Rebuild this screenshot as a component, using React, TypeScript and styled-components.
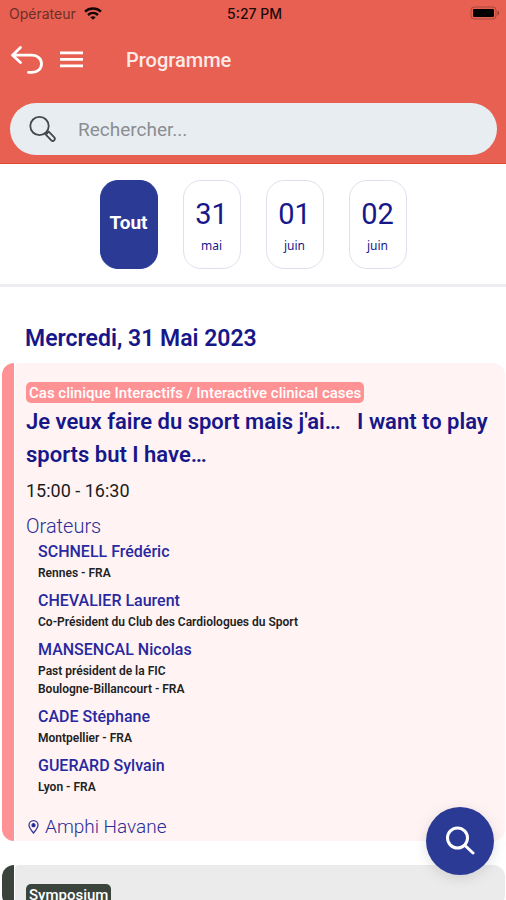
import React, { useState } from "react";
import styled, { createGlobalStyle } from "styled-components";

const GlobalStyle = createGlobalStyle`
  *, *::before, *::after { box-sizing: border-box; }
  body {
    margin: 0;
    background: #fff;
    font-family: Roboto, "Liberation Sans", sans-serif;
    color: #1c1c1c;
  }
  button, input { font: inherit; }
  h1, h2, h3, p, ul { margin: 0; padding: 0; }
`;

const navy = "#17178a";
const blue = "#2b3a95";

const Screen = styled.div`
  display: flex;
  flex-direction: column;
  height: 100vh;
  overflow: hidden;
`;

const Header = styled.header`
  background: #e86052;
  border-bottom: 1px solid #dc4a36;
  padding-bottom: 8px;
`;

const StatusBar = styled.div`
  display: grid;
  grid-template-columns: 1fr auto 1fr;
  align-items: center;
  height: 26px;
  padding: 0 6px 0 9px;
  font-family: Inter, Roboto, sans-serif;
  font-size: 14px;
  color: #1a0b09;
`;

const Carrier = styled.span`
  display: flex;
  align-items: center;
  gap: 8px;
  color: #6c2f28;
`;

const Clock = styled.span`
  font-weight: 500;
`;

const Battery = styled.svg`
  justify-self: end;
`;

const NavBar = styled.div`
  display: flex;
  align-items: center;
  height: 68px;
  padding: 0 10px;
`;

const IconButton = styled.button`
  display: flex;
  padding: 0;
  border: 0;
  background: none;
  color: #fff;
  cursor: pointer;
`;

const MenuButton = styled(IconButton)`
  margin: 0 42px 0 16px;
`;

const Title = styled.h1`
  font-size: 20px;
  font-weight: 500;
  line-height: 24px;
  color: #fdeae7;
`;

const SearchBar = styled.label`
  display: flex;
  align-items: center;
  gap: 20px;
  height: 52px;
  margin: 9px 9px 0 10px;
  padding: 0 18px;
  border-radius: 26px;
  background: #e8edf1;
`;

const SearchInput = styled.input`
  flex: 1;
  min-width: 0;
  padding: 0;
  border: 0;
  outline: 0;
  background: none;
  font-size: 19px;
  color: #333;
  &::placeholder {
    color: #8b8e91;
    opacity: 1;
  }
`;

const Days = styled.nav`
  display: flex;
  flex-shrink: 0;
  justify-content: center;
  gap: 25px;
  padding: 16px 0 15px;
  border-bottom: 3px solid #edeef2;
`;

const DayButton = styled.button<{ $active: boolean }>`
  display: flex;
  flex-direction: column;
  align-items: center;
  justify-content: center;
  width: 58px;
  height: 89px;
  padding: 0;
  border: 1px solid ${(p) => (p.$active ? blue : "#dfe0ee")};
  border-radius: 18px;
  background: ${(p) => (p.$active ? blue : "#fff")};
  color: ${(p) => (p.$active ? "#fff" : navy)};
  cursor: pointer;
`;

const DayAll = styled.span`
  padding-bottom: 4px;
  font-size: 19px;
  font-weight: 700;
`;

const DayNumber = styled.span`
  padding-top: 6px;
  font-size: 29px;
  line-height: 36px;
`;

const DayMonth = styled.span`
  font-family: "Noto Sans", sans-serif;
  font-size: 12px;
  line-height: 28px;
`;

const List = styled.main`
  flex: 1;
  min-height: 0;
  overflow: hidden;
`;

const DateHeading = styled.h2`
  padding: 36px 25px 8px;
  font-size: 23px;
  font-weight: 600;
  line-height: 32px;
  color: ${navy};
`;

const Card = styled.article<{ $accent: string; $tint: string }>`
  --accent: ${(p) => p.$accent};
  display: flex;
  gap: 1px;
  margin: 0 1px 24px 2px;
  &::before {
    content: "";
    width: 12px;
    border-radius: 12px 0 0 12px;
    background: var(--accent);
  }
  > div {
    background: ${(p) => p.$tint};
  }
`;

const CardBody = styled.div`
  flex: 1;
  min-width: 0;
  padding: 19px 12px 2px 11px;
  border-radius: 4px 12px 12px 4px;
`;

const Tag = styled.span`
  display: block;
  width: fit-content;
  padding: 1px 3px 0;
  border-radius: 5px;
  background: var(--accent);
  font-size: 15px;
  font-weight: 500;
  line-height: 20px;
  color: #fff;
`;

const SessionTitle = styled.h3`
  margin: 2px 0 8px;
  font-size: 22px;
  font-weight: 600;
  line-height: 33px;
  color: ${navy};
  white-space: pre-wrap;
`;

const Time = styled.p`
  margin-bottom: 11px;
  font-size: 18px;
  line-height: 24px;
`;

const SectionLabel = styled.p`
  margin-bottom: 2px;
  font-size: 20px;
  font-weight: 300;
  line-height: 24px;
  color: #2c2c96;
`;

const Speakers = styled.ul`
  display: flex;
  flex-direction: column;
  gap: 7px;
  padding-left: 12px;
  list-style: none;
`;

const SpeakerName = styled.p`
  font-size: 16px;
  font-weight: 500;
  line-height: 24px;
  color: #2828a0;
`;

const SpeakerDetail = styled.p`
  font-size: 12px;
  font-weight: 600;
  line-height: 18px;
  color: #222;
`;

const Place = styled.p`
  display: flex;
  align-items: center;
  gap: 6px;
  margin-top: 19px;
  padding-left: 2px;
  font-size: 19px;
  font-weight: 300;
  line-height: 24px;
  color: #2c2c96;
`;

const SearchFab = styled.button`
  position: fixed;
  right: 12px;
  bottom: 25px;
  display: flex;
  align-items: center;
  justify-content: center;
  width: 68px;
  height: 68px;
  padding: 0;
  border: 0;
  border-radius: 50%;
  background: ${blue};
  box-shadow: 0 3px 14px rgba(0, 0, 0, 0.12);
  color: #fff;
  cursor: pointer;
`;

const days = [
  { id: "all" },
  { id: "31", month: "mai" },
  { id: "01", month: "juin" },
  { id: "02", month: "juin" },
];

const speakers = [
  { name: "SCHNELL Frédéric", details: ["Rennes - FRA"] },
  { name: "CHEVALIER Laurent", details: ["Co-Président du Club des Cardiologues du Sport"] },
  { name: "MANSENCAL Nicolas", details: ["Past président de la FIC", "Boulogne-Billancourt - FRA"] },
  { name: "CADE Stéphane", details: ["Montpellier - FRA"] },
  { name: "GUERARD Sylvain", details: ["Lyon - FRA"] },
];

export default function App() {
  const [day, setDay] = useState("all");
  const [query, setQuery] = useState("");

  return (
    <Screen>
      <GlobalStyle />
      <Header>
        <StatusBar>
          <Carrier>
            Opérateur
            <svg width="18" height="13" viewBox="0 0 18 13" fill="none" stroke="#140706" strokeWidth="2.4">
              <path d="M1 4.600C5.400.4 12.600.4 17 4.600" />
              <path d="M4 8c2.900-2.700 7.100-2.700 10 0" />
              <path d="M9 12.800 6.300 10.200c1.500-1.300 3.900-1.300 5.400 0z" fill="#140706" stroke="none" />
            </svg>
          </Carrier>
          <Clock>5:27 PM</Clock>
          <Battery width="30" height="14" viewBox="0 0 30 14">
            <rect x="1" y="1" width="25" height="12" rx="3" fill="none" stroke="#a8463c" />
            <rect x="3" y="3" width="21" height="8" rx="1" fill="#000" />
            <path d="M27.500 4.500c2 .8 2 4.200 0 5z" fill="#8a392f" />
          </Battery>
        </StatusBar>
        <NavBar>
          <IconButton aria-label="Retour">
            <svg width="34" height="30" viewBox="0 0 34 30" fill="none" stroke="currentColor" strokeWidth="2.800" strokeLinecap="round" strokeLinejoin="round">
              <path d="M10.500 2.500 2.500 10.200l8 7.300M2.500 10.200H22c5.500 0 9.500 3.500 9.500 8.600s-4 8.600-9.500 8.600h-3.500" />
            </svg>
          </IconButton>
          <MenuButton aria-label="Menu">
            <svg width="24" height="20" viewBox="0 0 24 20" stroke="currentColor" strokeWidth="2.700">
              <path d="M0 2.800h23M0 9.300h23M0 15.800h23" />
            </svg>
          </MenuButton>
          <Title>Programme</Title>
        </NavBar>
        <SearchBar>
          <svg width="30" height="28" viewBox="0 0 30 28" fill="none" stroke="#45484b" strokeWidth="1.800" strokeLinejoin="round">
            <circle cx="11.500" cy="11" r="9.200" />
            <path d="m17.800 17.300 1.600 1.600" />
            <path d="m17.800 19.600 3-3 5.500 5.800c1.700 2-1 4.700-3 3z" />
          </svg>
          <SearchInput
            type="search"
            aria-label="Rechercher"
            placeholder="Rechercher..."
            value={query}
            onChange={(e) => setQuery(e.target.value)}
          />
        </SearchBar>
      </Header>

      <Days aria-label="Jours">
        {days.map((d) => (
          <DayButton key={d.id} $active={d.id === day} aria-pressed={d.id === day} onClick={() => setDay(d.id)}>
            {d.month ? (
              <>
                <DayNumber>{d.id}</DayNumber>
                <DayMonth>{d.month}</DayMonth>
              </>
            ) : (
              <DayAll>Tout</DayAll>
            )}
          </DayButton>
        ))}
      </Days>

      <List>
        <DateHeading>Mercredi, 31 Mai 2023</DateHeading>
        <Card $accent="#ff9294" $tint="#fff4f3">
          <CardBody>
            <Tag>Cas clinique Interactifs / Interactive clinical cases</Tag>
            <SessionTitle>{"Je veux faire du sport mais j'ai…   I want to play sports but I have…"}</SessionTitle>
            <Time>15:00 - 16:30</Time>
            <SectionLabel>Orateurs</SectionLabel>
            <Speakers>
              {speakers.map((s) => (
                <li key={s.name}>
                  <SpeakerName>{s.name}</SpeakerName>
                  {s.details.map((line) => (
                    <SpeakerDetail key={line}>{line}</SpeakerDetail>
                  ))}
                </li>
              ))}
            </Speakers>
            <Place>
              <svg width="11" height="14" viewBox="0 0 11 14" fill="none" stroke="#33339a" strokeWidth="1.300">
                <path d="M5.500 13C3 10 1 7.500 1 5.200a4.500 4.500 0 0 1 9 0C10 7.500 8 10 5.500 13z" />
                <circle cx="5.500" cy="5.200" r="1.500" fill="#17178a" />
              </svg>
              Amphi Havane
            </Place>
          </CardBody>
        </Card>
        <Card $accent="#3b433d" $tint="#ebebeb">
          <CardBody>
            <Tag>Symposium</Tag>
          </CardBody>
        </Card>
      </List>

      <SearchFab aria-label="Rechercher une session">
        <svg width="30" height="30" viewBox="0 0 30 30" fill="none" stroke="currentColor" strokeWidth="3" strokeLinecap="round">
          <circle cx="12.500" cy="12" r="10" />
          <path d="m20 19.500 8 7.500" />
        </svg>
      </SearchFab>
    </Screen>
  );
}
